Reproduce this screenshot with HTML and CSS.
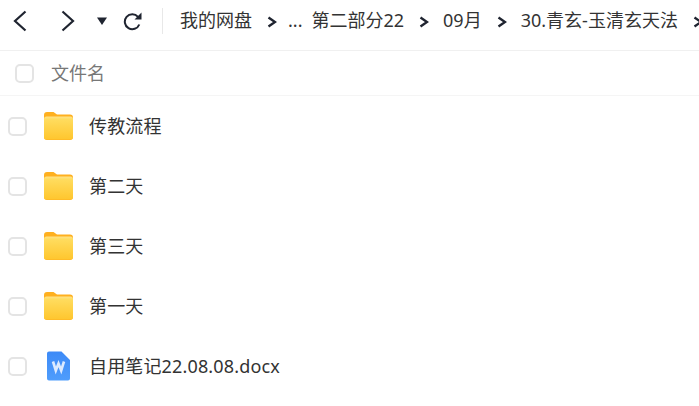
FILE: index.html
```html
<!DOCTYPE html>
<html lang="zh-CN">
<head>
  <meta charset="UTF-8" />
  <title>我的网盘</title>
  <link rel="stylesheet" href="styles.css">
</head>
<body>
  <svg class="defs" width="0" height="0">
    <defs>
      <linearGradient id="folderFront" x1="0" y1="0" x2="0" y2="1">
        <stop offset="0" stop-color="#ffe48a"/>
        <stop offset="0.12" stop-color="#ffdc5e"/>
        <stop offset="1" stop-color="#ffc62e"/>
      </linearGradient>
      <linearGradient id="docBody" x1="0" y1="0" x2="0" y2="1">
        <stop offset="0" stop-color="#3d8af7"/>
        <stop offset="1" stop-color="#4f9dfc"/>
      </linearGradient>
      <symbol id="folder" viewBox="0 0 29 28">
        <path d="M0 3a3 3 0 0 1 3-3h6.500l3.500 2.500h13a3 3 0 0 1 3 3V25a3 3 0 0 1-3 3H3a3 3 0 0 1-3-3z" fill="#ffb01f"/>
        <path d="M0 7a2.500 2.500 0 0 1 2.500-2.500h24A2.500 2.500 0 0 1 29 7v18a2.500 2.500 0 0 1-2.500 2.500h-24A2.500 2.500 0 0 1 0 25z" fill="url(#folderFront)"/>
      </symbol>
      <symbol id="chevron" viewBox="0 0 10 12">
        <path d="M1.500 1.500 8 6l-6.500 4.500" fill="none" stroke="#1f2430" stroke-width="2.400"/>
      </symbol>
    </defs>
  </svg>

  <div class="toolbar">
    <div class="nav">
      <svg class="nav-back" width="14" height="22" viewBox="0 0 14 22"><path d="M12.500 1.500 2 11l10.500 9.500" fill="none" stroke="#1f2430" stroke-width="2.200"/></svg>
      <svg class="nav-forward" width="14" height="22" viewBox="0 0 14 22"><path d="M1.500 1.500 12 11 1.500 20.500" fill="none" stroke="#1f2430" stroke-width="2.200"/></svg>
      <svg class="nav-drop" width="10" height="8" viewBox="0 0 10 8"><path d="M0 0.500h10L5 8z" fill="#1f2430"/></svg>
      <svg class="nav-reload" width="20" height="20" viewBox="0 0 20 20"><path d="M15 5.800A7.500 7.500 0 1 0 16.300 13.500" fill="none" stroke="#1f2430" stroke-width="2"/><path d="M18.500 1.500v7h-7z" fill="#1f2430"/></svg>
    </div>
    <div class="crumbs">
      <span>我的网盘</span>
      <svg class="sep" width="10" height="12"><use href="#chevron"/></svg>
      <span class="dots">...</span>
      <span>第二部分22</span>
      <svg class="sep" width="10" height="12"><use href="#chevron"/></svg>
      <span>09月</span>
      <svg class="sep" width="10" height="12"><use href="#chevron"/></svg>
      <span>30.青玄-玉清玄天法</span>
      <svg class="sep" width="10" height="12"><use href="#chevron"/></svg>
    </div>
  </div>

  <div class="list-head">
    <span class="check"></span>
    <span class="head-name">文件名</span>
  </div>

  <div class="list">
    <div class="row">
      <span class="check"></span>
      <svg class="icon" width="29" height="28"><use href="#folder"/></svg>
      <span class="name">传教流程</span>
    </div>
    <div class="row">
      <span class="check"></span>
      <svg class="icon" width="29" height="28"><use href="#folder"/></svg>
      <span class="name">第二天</span>
    </div>
    <div class="row">
      <span class="check"></span>
      <svg class="icon" width="29" height="28"><use href="#folder"/></svg>
      <span class="name">第三天</span>
    </div>
    <div class="row">
      <span class="check"></span>
      <svg class="icon" width="29" height="28"><use href="#folder"/></svg>
      <span class="name">第一天</span>
    </div>
    <div class="row">
      <span class="check"></span>
      <svg class="icon" width="29" height="30" viewBox="0 0 29 30"><path d="M5 0.500h12.500L26 9v18.500a2 2 0 0 1-2 2H5a2 2 0 0 1-2-2V2.500a2 2 0 0 1 2-2z" fill="url(#docBody)"/><path d="M9 10.500l2.800 9 2.700-7 2.700 7 2.800-9" fill="none" stroke="#dceaff" stroke-width="2.600"/></svg>
      <span class="name">自用笔记22.08.08.docx</span>
    </div>
  </div>
</body>
</html>
```

FILE: styles.css
```css
* {
  box-sizing: border-box;
}

html, body {
  height: 100%;
}

body {
  margin: 0;
  overflow: hidden;
  background: #fff;
  color: #333;
  font-family: "Noto Sans", "Noto Sans CJK SC", sans-serif;
}

.defs {
  display: block;
}

.toolbar {
  display: flex;
  align-items: center;
  height: 51px;
  border-bottom: 1px solid #f0f0f0;
  padding: 0 0 8px 13px;
  white-space: nowrap;
  overflow: hidden;
}

.nav {
  display: flex;
  align-items: center;
  flex: none;
  width: 150px;
  height: 26px;
  border-right: 1px solid #e8e8e8;
}

.nav-back { margin-right: 34px; }
.nav-forward { margin-right: 22px; }
.nav-drop { margin-right: 16px; }

.crumbs {
  display: flex;
  align-items: center;
  flex: none;
  margin-left: 17px;
  font-size: 18px;
}

.crumbs span {
  line-height: 24px;
  padding-bottom: 3px;
}

.crumbs .sep {
  margin: 1px 14px 0 15px;
  flex: none;
}

.crumbs .dots {
  margin: 0 9px 0 -3px;
}

.list-head {
  display: flex;
  align-items: center;
  height: 45px;
  padding-left: 15px;
  border-bottom: 1px solid #f5f5f5;
}

.head-name {
  margin-left: 17px;
  padding-bottom: 2px;
  font-size: 18px;
  color: #777;
}

.check {
  flex: none;
  width: 19px;
  height: 19px;
  border: 2px solid #e4e4e4;
  border-radius: 5px;
  background: #fff;
}

.list {
  display: flex;
  flex-direction: column;
}

.row {
  display: flex;
  align-items: center;
  height: 60px;
  padding-left: 8px;
}

.icon {
  margin-left: 17px;
  flex: none;
}

.name {
  margin-left: 16px;
  padding-bottom: 2px;
  font-size: 18px;
  letter-spacing: 0.15px;
  color: #333;
}
```
